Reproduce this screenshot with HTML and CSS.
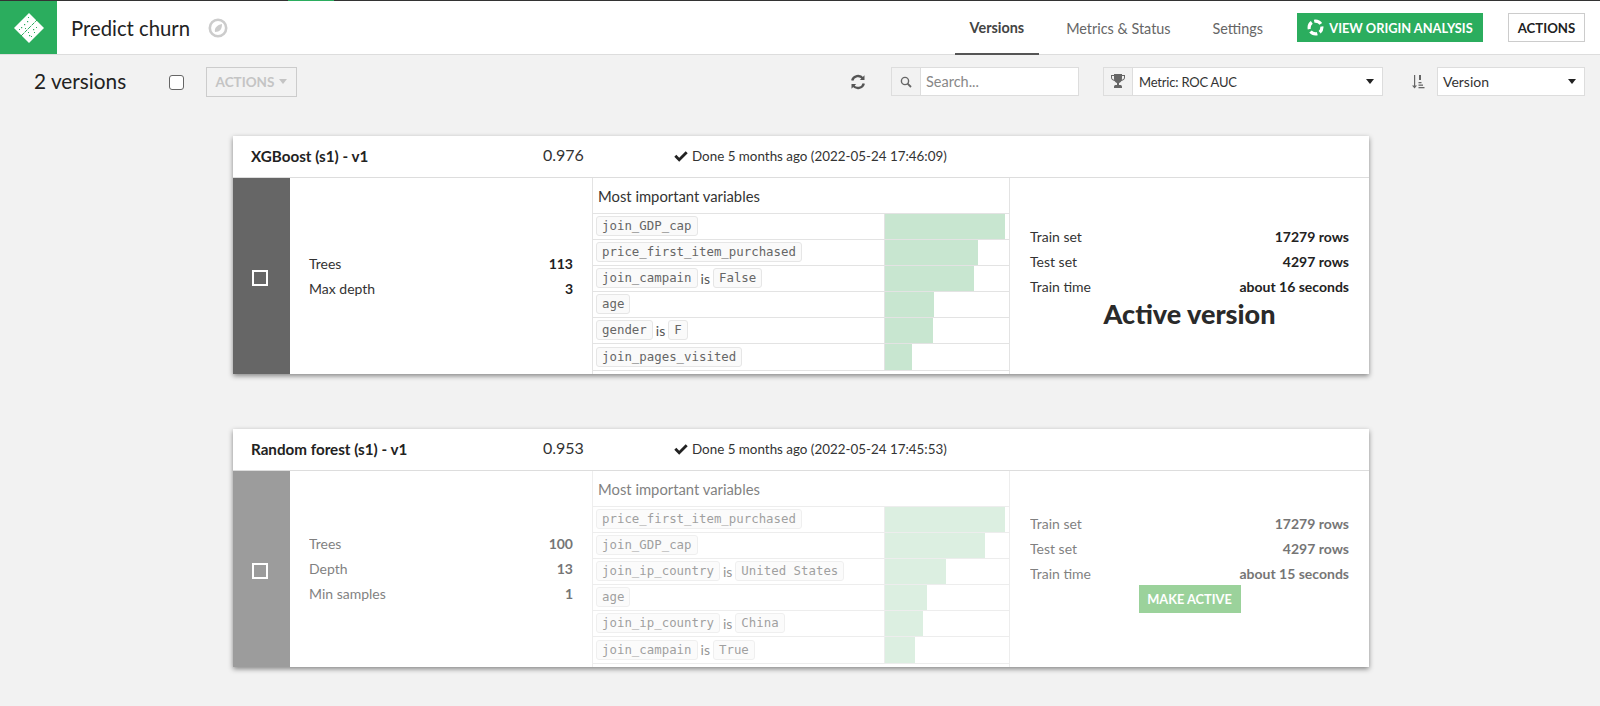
FILE: index.html
```html
<!DOCTYPE html>
<html lang="en">
<head>
<meta charset="utf-8">
<title>Predict churn</title>
<link rel="stylesheet" href="styles.css">
</head>
<body>
<div class="topline"><div class="topline-mark"></div></div>
<header class="header">
  <div class="logo">
    <svg width="34" height="34" viewBox="0 0 34 34">
      <path d="M17 2 32 17 17 32 2 17Z" fill="#fff"/>
      <path d="M9 25 25 9" stroke="#2bad5e" stroke-width="1" stroke-dasharray="4 1"/>
      <g fill="#2bad5e">
        <rect x="9" y="16" width="1.2" height="1.2"/><rect x="12" y="13" width="1.200" height="1.200"/><rect x="15" y="10" width="1.200" height="1.200"/>
        <rect x="13" y="17" width="1" height="1"/><rect x="7" y="18" width="1" height="1"/><rect x="16" y="6" width="1" height="1"/>
        <rect x="21" y="18" width="1.200" height="1.200"/><rect x="24" y="16" width="1" height="1"/><rect x="17" y="24" width="1.200" height="1.200"/>
        <rect x="19" y="25" width="1" height="1"/><rect x="22" y="21" width="1" height="1"/><rect x="16" y="21" width="1" height="1"/>
      </g>
    </svg>
  </div>
  <h1 class="title">Predict churn</h1>
  <svg class="compass" width="20" height="20" viewBox="0 0 20 20">
    <circle cx="10" cy="10" r="8.200" fill="none" stroke="#ccc" stroke-width="2.600"/>
    <path d="M14 6C14 11 12 14 7 14 6 10 9 7 14 6Z" fill="#ccc"/>
  </svg>
  <nav class="tabs">
    <a class="tab tab-active">Versions</a>
    <a class="tab">Metrics &amp; Status</a>
    <a class="tab">Settings</a>
  </nav>
  <button class="btn-origin">
    <svg width="17" height="17" viewBox="0 0 16 16" fill="none" stroke="#fff" stroke-width="3">
      <circle cx="8" cy="8" r="6" stroke-dasharray="7 2.420" stroke-dashoffset="2"/>
    </svg>
    VIEW ORIGIN ANALYSIS
  </button>
  <button class="btn-actions">ACTIONS</button>
</header>

<section class="toolbar">
  <h2 class="count">2 versions</h2>
  <input class="check-main" type="checkbox">
  <button class="btn-disabled">ACTIONS <span class="caret caret-light"></span></button>
  <svg class="refresh" width="16" height="16" viewBox="0 0 16 16" fill="none" stroke="#555" stroke-width="2.400">
    <path d="M2.200 6.500A6 6 0 0 1 12.800 4.400"/><path d="M13.800 9.500A6 6 0 0 1 3.200 11.600"/>
    <path d="M14.500 1.200V6H9.800Z" fill="#555" stroke="none"/><path d="M1.500 14.800V10H6.200Z" fill="#555" stroke="none"/>
  </svg>
  <div class="control control-search">
    <span class="addon">
      <svg width="12" height="12" viewBox="0 0 12 12" fill="none" stroke="#666" stroke-width="1.400"><circle cx="5" cy="5" r="3.600"/><path d="M7.600 7.600 11 11" stroke-width="1.800"/></svg>
    </span>
    <span class="control-text placeholder">Search...</span>
  </div>
  <div class="control control-metric">
    <span class="addon">
      <svg width="14" height="15" viewBox="0 0 14 15" fill="#666"><path d="M3 0h8v1h3v2.500c0 2-1.600 3.200-3.600 3.400C9.800 8 9 8.600 8 8.900V11h1.600c.8 0 1.400.8 1.400 2v1H3v-1c0-1.200.6-2 1.400-2H6V8.900c-1-.3-1.800-.9-2.400-2C1.600 6.700 0 5.500 0 3.500V1h3Zm-2 2v1.500C1 4.800 2 5.600 3.100 5.800 3 5 3 3.500 3 2Zm12 0h-2c0 1.500 0 3-.1 3.800C12 5.600 13 4.800 13 3.500Z"/></svg>
    </span>
    <span class="control-text control-text-metric">Metric: ROC AUC</span>
    <span class="caret"></span>
  </div>
  <svg class="sort" width="13" height="14" viewBox="0 0 13 14" fill="#666">
    <path d="M2 0h1.200v10.500H5L2.600 13.500 0 10.500h2Z"/><rect x="7" y="0" width="2" height="5"/><rect x="6.500" y="7" width="3" height="1.300"/><rect x="6.500" y="9.500" width="4.500" height="1.300"/><rect x="6.500" y="12" width="6" height="1.300"/>
  </svg>
  <div class="control control-version">
    <span class="control-text">Version</span>
    <span class="caret"></span>
  </div>
</section>

<main class="list">
  <article class="card">
    <div class="card-head">
      <span class="model-name">XGBoost (s1) - v1</span>
      <span class="score">0.976</span>
      <span class="status">
        <svg width="14" height="11" viewBox="0 0 14 11"><path d="M.3 5.800 2.300 3.800 5.200 6.700 11.700.2 13.700 2.200 5.200 10.700Z" fill="#222"/></svg>
        Done 5 months ago (2022-05-24 17:46:09)
      </span>
    </div>
    <div class="card-body">
      <div class="side side-active"><input class="check-side" type="checkbox"></div>
      <div class="params">
        <div class="kv"><span>Trees</span><b>113</b></div>
        <div class="kv"><span>Max depth</span><b>3</b></div>
      </div>
      <div class="vars">
        <div class="vars-title">Most important variables</div>
        <div class="var-row"><div class="var-name"><code class="chip">join_GDP_cap</code></div><div class="var-bar"><div class="bar" style="width:120px"></div></div></div>
        <div class="var-row"><div class="var-name"><code class="chip">price_first_item_purchased</code></div><div class="var-bar"><div class="bar" style="width:93px"></div></div></div>
        <div class="var-row"><div class="var-name"><code class="chip">join_campain</code> is <code class="chip">False</code></div><div class="var-bar"><div class="bar" style="width:89px"></div></div></div>
        <div class="var-row"><div class="var-name"><code class="chip">age</code></div><div class="var-bar"><div class="bar" style="width:49px"></div></div></div>
        <div class="var-row"><div class="var-name"><code class="chip">gender</code> is <code class="chip">F</code></div><div class="var-bar"><div class="bar" style="width:48px"></div></div></div>
        <div class="var-row"><div class="var-name"><code class="chip">join_pages_visited</code></div><div class="var-bar"><div class="bar" style="width:27px"></div></div></div>
      </div>
      <div class="train">
        <div class="kv"><span>Train set</span><b>17279 rows</b></div>
        <div class="kv"><span>Test set</span><b>4297 rows</b></div>
        <div class="kv"><span>Train time</span><b>about 16 seconds</b></div>
        <div class="active-label">Active version</div>
      </div>
    </div>
  </article>

  <article class="card card-inactive">
    <div class="card-head">
      <span class="model-name">Random forest (s1) - v1</span>
      <span class="score">0.953</span>
      <span class="status">
        <svg width="14" height="11" viewBox="0 0 14 11"><path d="M.3 5.800 2.300 3.800 5.200 6.700 11.700.2 13.700 2.200 5.200 10.700Z" fill="#222"/></svg>
        Done 5 months ago (2022-05-24 17:45:53)
      </span>
    </div>
    <div class="card-body">
      <div class="side side-inactive"><input class="check-side" type="checkbox"></div>
      <div class="params faded">
        <div class="kv"><span>Trees</span><b>100</b></div>
        <div class="kv"><span>Depth</span><b>13</b></div>
        <div class="kv"><span>Min samples</span><b>1</b></div>
      </div>
      <div class="vars faded">
        <div class="vars-title">Most important variables</div>
        <div class="var-row"><div class="var-name"><code class="chip">price_first_item_purchased</code></div><div class="var-bar"><div class="bar" style="width:120px"></div></div></div>
        <div class="var-row"><div class="var-name"><code class="chip">join_GDP_cap</code></div><div class="var-bar"><div class="bar" style="width:100px"></div></div></div>
        <div class="var-row"><div class="var-name"><code class="chip">join_ip_country</code> is <code class="chip">United States</code></div><div class="var-bar"><div class="bar" style="width:61px"></div></div></div>
        <div class="var-row"><div class="var-name"><code class="chip">age</code></div><div class="var-bar"><div class="bar" style="width:42px"></div></div></div>
        <div class="var-row"><div class="var-name"><code class="chip">join_ip_country</code> is <code class="chip">China</code></div><div class="var-bar"><div class="bar" style="width:38px"></div></div></div>
        <div class="var-row"><div class="var-name"><code class="chip">join_campain</code> is <code class="chip">True</code></div><div class="var-bar"><div class="bar" style="width:30px"></div></div></div>
      </div>
      <div class="train">
        <div class="faded">
          <div class="kv"><span>Train set</span><b>17279 rows</b></div>
          <div class="kv"><span>Test set</span><b>4297 rows</b></div>
          <div class="kv"><span>Train time</span><b>about 15 seconds</b></div>
        </div>
        <button class="btn-make">MAKE ACTIVE</button>
      </div>
    </div>
  </article>
</main>
</body>
</html>
```
FILE: styles.css
```css
* { box-sizing: border-box; }
html, body { height: 100%; }
body {
  margin: 0;
  background: #f2f2f2;
  color: #222;
  font-family: "Lato", "Liberation Sans", sans-serif;
  font-size: 14px;
  overflow: hidden;
}
button { font-family: inherit; cursor: pointer; }

.topline { height: 1px; background: #333; }
.topline-mark { width: 46px; height: 1px; margin-left: 288px; background: #2bad5e; }

.header {
  display: flex;
  align-items: center;
  height: 54px;
  background: #fff;
  border-bottom: 1px solid #ddd;
  padding-right: 15px;
}
.logo {
  width: 57px;
  height: 53px;
  background: #2bad5e;
  display: flex;
  align-items: center;
  justify-content: center;
}
.title { margin: 0 0 0 14px; font-size: 20.300px; font-weight: 400; color: #222; }
.compass { margin-left: 18px; }
.tabs { display: flex; gap: 12px; margin-left: auto; height: 53px; }
.tab {
  display: flex;
  align-items: center;
  padding: 0 15px;
  height: 54px;
  font-size: 14.400px;
  color: #666;
}
.tab-active { color: #444; font-weight: 700; border-bottom: 2px solid #555; }
.btn-origin {
  display: flex;
  align-items: center;
  justify-content: center;
  gap: 5px;
  width: 186px;
  height: 29px;
  margin-left: 19px;
  padding: 0;
  background: #2bad5e;
  border: 1px solid #2bad5e;
  color: #fff;
  font-size: 12.800px;
  font-weight: 700;
}
.btn-actions {
  width: 77px;
  height: 29px;
  margin-left: 25px;
  padding: 0;
  background: #fff;
  border: 1px solid #ccc;
  color: #222;
  font-size: 13.200px;
  font-weight: 700;
}

.toolbar {
  display: flex;
  align-items: center;
  height: 53px;
  padding: 0 15px 0 34px;
}
.count { margin: 0 0 2px; width: 135px; font-size: 20.800px; font-weight: 400; color: #222; }
.check-main {
  appearance: none;
  width: 15px;
  height: 15px;
  margin: 2px 0 0 0;
  background: #fff;
  border: 1px solid #666;
  border-radius: 3px;
}
.btn-disabled {
  display: flex;
  align-items: center;
  justify-content: center;
  gap: 5px;
  width: 91px;
  height: 30px;
  margin-left: 22px;
  padding: 0;
  background: transparent;
  border: 1px solid #ccc;
  color: #c4c4c4;
  font-size: 13.500px;
  font-weight: 700;
}
.caret {
  width: 0;
  height: 0;
  border-left: 4.500px solid transparent;
  border-right: 4.500px solid transparent;
  border-top: 5px solid #222;
}
.caret-light { border-top-color: #c4c4c4; }
.refresh { margin-left: auto; margin-right: 25px; }
.control {
  display: flex;
  align-items: center;
  height: 29px;
  background: #fff;
  border: 1px solid #ddd;
  font-size: 14px;
}
.control-search { width: 188px; }
.control-metric { width: 280px; margin-left: 24px; }
.control-version { width: 148px; }
.addon {
  display: flex;
  align-items: center;
  justify-content: center;
  width: 29px;
  height: 100%;
  background: #f2f2f2;
  border-right: 1px solid #ddd;
  flex: none;
}
.control-text { flex: 1; padding-left: 5px; color: #333; }
.control-text-metric { padding-left: 6px; font-size: 13px; letter-spacing: -.2px; }
.control .caret { margin-right: 8px; }
.placeholder { color: #888; font-size: 14.500px; }
.sort { margin: 0 12px 0 29px; }

.list {
  display: flex;
  flex-direction: column;
  gap: 55px;
  width: 1136px;
  margin: 28px 0 0 233px;
}
.card {
  height: 238px;
  background: #fff;
  box-shadow: 0 2px 5px rgba(0, 0, 0, .45);
}
.card-head {
  display: flex;
  align-items: center;
  height: 42px;
  padding: 0 0 1px 18px;
  border-bottom: 1px solid #ddd;
}
.model-name { width: 292px; font-size: 15.200px; font-weight: 700; color: #222; }
.score { width: 131px; margin-bottom: 4px; font-size: 16px; color: #333; }
.status { display: flex; align-items: center; gap: 4px; font-size: 13.400px; color: #333; }
.card-body { display: flex; height: 196px; }
.side {
  width: 57px;
  flex: none;
  display: flex;
  align-items: center;
  justify-content: center;
}
.side-active { background: #666; }
.side-inactive { background: #9c9c9c; }
.check-side {
  appearance: none;
  width: 16px;
  height: 16px;
  margin: 3px 3px 0 0;
  background: transparent;
  border: 2px solid #fff;
}
.params {
  width: 303px;
  flex: none;
  display: flex;
  flex-direction: column;
  justify-content: center;
  padding: 0 19px 1px 19px;
  border-right: 1px solid #e3e3e3;
}
.kv {
  display: flex;
  justify-content: space-between;
  align-items: center;
  height: 25px;
  font-size: 14px;
  color: #333;
}
.kv b { font-weight: 700; color: #222; }
.vars {
  width: 417px;
  flex: none;
  border-right: 1px solid #e3e3e3;
}
.vars-title {
  display: flex;
  align-items: center;
  height: 36px;
  padding-left: 5px;
  font-size: 14.800px;
  color: #333;
  border-bottom: 1px solid #e3e3e3;
}
.var-row {
  display: flex;
  height: 26.100px;
  border-bottom: 1px solid #e3e3e3;
}
.var-name {
  width: 292px;
  flex: none;
  display: flex;
  align-items: center;
  gap: 3px;
  padding: 0 0 1px 3px;
  font-size: 14px;
  color: #555;
  border-right: 1px solid #e3e3e3;
}
.chip {
  display: inline-block;
  height: 20px;
  line-height: 18px;
  padding: 0 5px;
  background: #fafafa;
  border: 1px solid #e6e6e6;
  border-radius: 3px;
  font-family: "DejaVu Sans Mono", "Liberation Mono", monospace;
  font-size: 12.400px;
  color: #666;
}
.var-bar { flex: 1; padding-right: 4px; }
.bar { height: 100%; background: #c8e6d0; }
.train {
  flex: 1;
  display: flex;
  flex-direction: column;
  justify-content: center;
  padding: 0 20px 1px 20px;
}
.active-label {
  height: 27px;
  margin-top: 1px;
  line-height: 27px;
  text-align: center;
  font-size: 27px;
  font-weight: 900;
  color: #2a2a2a;
}
.btn-make {
  align-self: center;
  width: 102px;
  height: 28px;
  margin: -1px 0 13px 0;
  padding: 0;
  background: #9bd29b;
  border: 0;
  color: #fff;
  font-size: 12.800px;
  font-weight: 700;
}
.faded { opacity: .62; }
```
